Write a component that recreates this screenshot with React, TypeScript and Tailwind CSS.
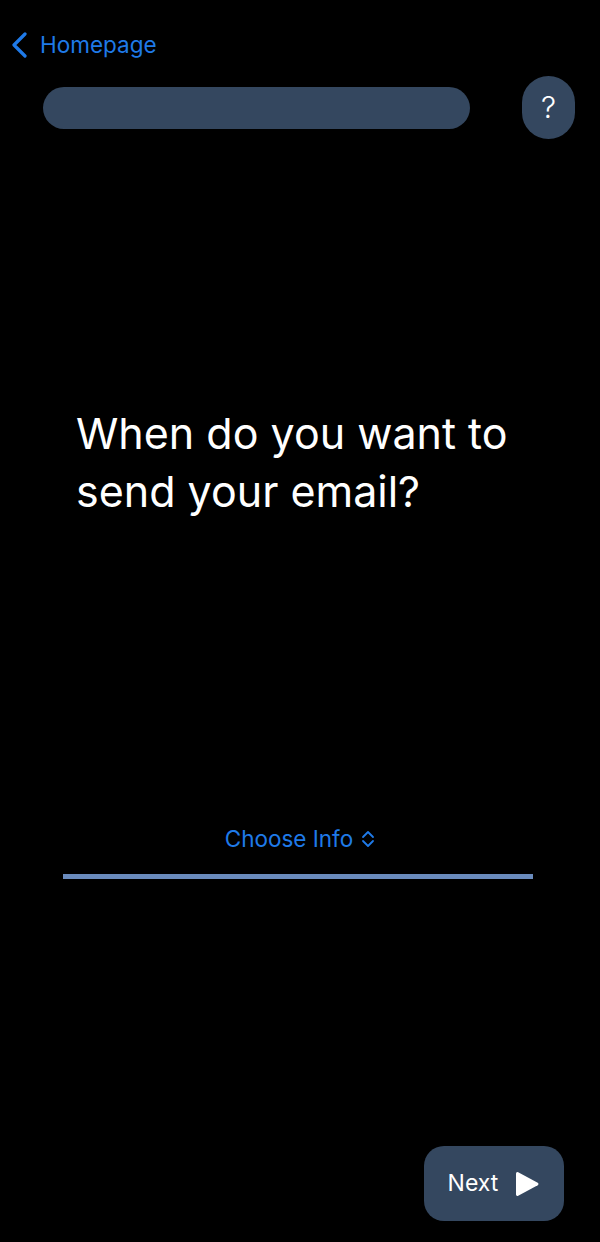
import * as React from 'react';

const font = { fontFamily: 'Inter, "Noto Sans", sans-serif' };

const BackChevron = () => (
  <svg width="18" height="26" viewBox="0 0 18 26" fill="none">
    <path d="M14 2L3 13l11 11" stroke="#1f7ae8" strokeWidth="3.2" strokeLinecap="round" strokeLinejoin="round" />
  </svg>
);

const UpDown = () => (
  <svg width="14" height="18" viewBox="0 0 14 18" fill="none">
    <path d="M2 7l5-5 5 5M2 11l5 5 5-5" stroke="#1f7ae8" strokeWidth="1.8" strokeLinecap="round" strokeLinejoin="round" />
  </svg>
);

const Play = () => (
  <svg width="26" height="26" viewBox="0 0 26 26">
    <path d="M2 2.5v21a1.5 1.5 0 0 0 2.2 1.3l19.5-10.5a1.5 1.5 0 0 0 0-2.6L4.2 1.2A1.5 1.5 0 0 0 2 2.5z" fill="#fff" />
  </svg>
);

export default function App() {
  return (
    <div className="w-[600px] h-[1242px] bg-black flex flex-col text-white" style={font}>
      <div className="flex items-center pt-[32px] pl-[11px] gap-[11px]">
        <BackChevron />
        <span className="text-[22.5px] leading-[26px] text-[#1f7ae8]">Homepage</span>
      </div>

      <div className="flex items-center mt-[18px] pl-[43px]">
        <div className="w-[427px] h-[42px] rounded-full bg-[#34475f]" />
        <button className="ml-[52px] w-[53px] h-[63px] rounded-full bg-[#34475f] flex items-center justify-center text-[30px] font-light text-white">
          ?
        </button>
      </div>

      <h1 className="mt-[265px] pl-[76px] pr-[60px] text-[43px] leading-[58px] font-normal text-white">
        When do you want to send your email?
      </h1>

      <div className="mt-[305px] flex items-center justify-center gap-[8px]">
        <span className="text-[22.5px] leading-[28px] text-[#1f7ae8]">Choose Info</span>
        <UpDown />
      </div>

      <div className="mt-[21px] mx-[63px] w-[470px] h-[5px] bg-[#6a8bbd]" />

      <div className="mt-auto mb-[21px] flex justify-end pr-[36px]">
        <button className="w-[140px] h-[75px] rounded-[20px] bg-[#34475f] flex items-center justify-center gap-[16px] text-[23px] text-white">
          <span>Next</span>
          <Play />
        </button>
      </div>
    </div>
  );
}
